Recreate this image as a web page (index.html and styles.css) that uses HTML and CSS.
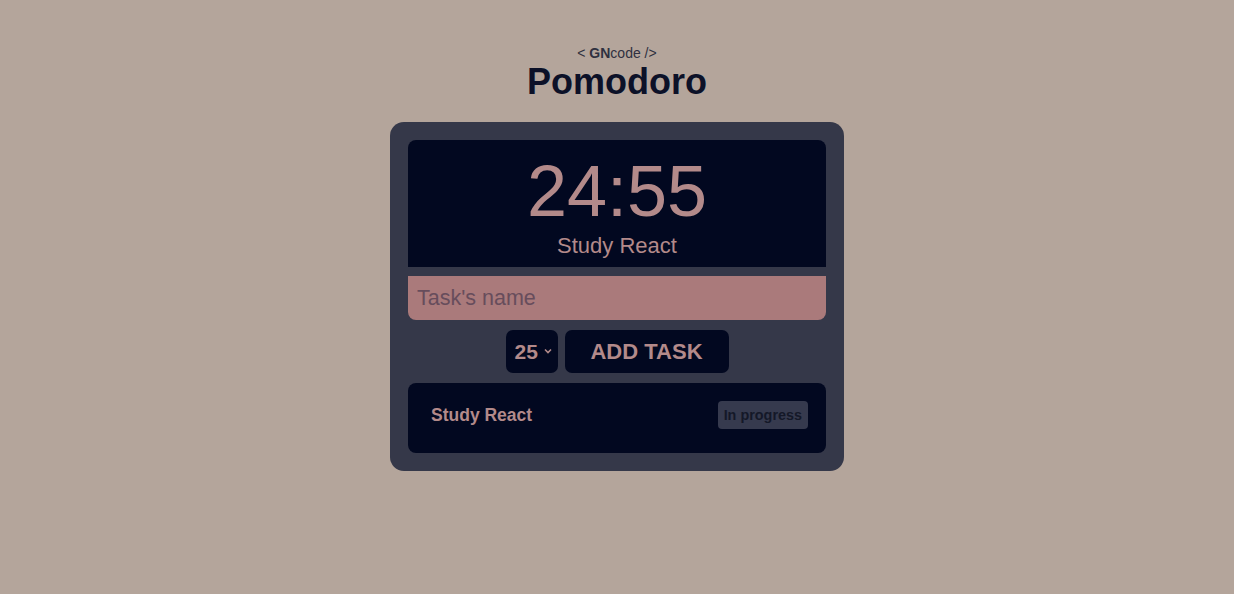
FILE: index.html
```html
<!DOCTYPE html>
<html lang="en">
<head>
  <meta charset="UTF-8">
  <title>Pomodoro</title>
  <link rel="stylesheet" href="styles.css">
</head>
<body>
<header class="brand">
  <p class="brand-tag">&lt; <strong>GN</strong>code /&gt;</p>
  <h1 class="brand-title">Pomodoro</h1>
</header>

<main class="pomodoro">
  <section class="timer">
    <div class="timer-clock">24:55</div>
    <div class="timer-task">Study React</div>
  </section>
  <input class="task-input" type="text" placeholder="Task's name">
  <div class="task-controls">
    <div class="minutes">25
      <svg class="minutes-arrow" width="8" height="6" viewBox="0 0 8 6"><path d="M1 1.5 L4 4.5 L7 1.5" fill="none" stroke="currentColor" stroke-width="1.6"/></svg>
    </div>
    <button class="add-btn">ADD TASK</button>
  </div>
  <ul class="task-list">
    <li class="task-item">
      <span class="task-name">Study React</span>
      <span class="task-status">In progress</span>
    </li>
  </ul>
</main>
</body>
</html>
```

FILE: styles.css
```css
html {
  font-family: "Liberation Sans", Arial, Helvetica, sans-serif;
}
body {
  margin: 0;
  background: #b4a59b;
  display: flex;
  flex-direction: column;
  align-items: center;
  padding-top: 45px;
}
.brand {
  text-align: center;
}
.brand-tag {
  margin: 0;
  font-size: 14px;
  color: #2f3040;
}
.brand-title {
  margin: 0;
  font-size: 36px;
  line-height: 42px;
  color: #0c1128;
}
.pomodoro {
  margin-top: 19px;
  width: 418px;
  padding: 18px;
  background: #353849;
  border-radius: 14px;
  display: flex;
  flex-direction: column;
}
.timer {
  background: #020820;
  border-radius: 8px 8px 0 0;
  height: 127px;
  color: #b38a8a;
  text-align: center;
  padding-top: 12px;
  box-sizing: border-box;
}
.timer-clock {
  font-size: 72px;
  line-height: 78px;
}
.timer-task {
  margin-top: 3px;
  font-size: 22px;
  line-height: 26px;
}
.task-input {
  margin-top: 9px;
  height: 44px;
  border: none;
  border-radius: 0 0 8px 8px;
  background: #aa7a7b;
  font-family: inherit;
  font-size: 21.5px;
  padding: 0 9px;
  outline: none;
}
.task-input::placeholder {
  color: #674d5c;
}
.task-controls {
  margin-top: 10px;
  display: flex;
  justify-content: center;
  gap: 7px;
}
.minutes,
.add-btn {
  background: #020820;
  color: #b38a8a;
  font-family: inherit;
  font-weight: bold;
  font-size: 21px;
  border: none;
  border-radius: 7px;
  height: 43px;
  display: flex;
  align-items: center;
}
.minutes {
  width: 52px;
  padding-left: 9px;
  box-sizing: border-box;
}
.minutes-arrow {
  margin-left: 6px;
  margin-top: -2px;
}
.add-btn {
  width: 164px;
  justify-content: center;
  font-size: 22px;
}
.task-list {
  list-style: none;
  margin: 10px 0 0;
  padding: 0;
  background: #020820;
  border-radius: 8px;
}
.task-item {
  height: 70px;
  box-sizing: border-box;
  display: flex;
  align-items: center;
  justify-content: space-between;
  padding: 0 18px 6px 23px;
}
.task-name {
  color: #b38a8a;
  font-weight: bold;
  font-size: 17.5px;
}
.task-status {
  background: #363a4e;
  color: #141828;
  font-weight: bold;
  font-size: 14.4px;
  padding: 6px 6px;
  border-radius: 4px;
}
```
